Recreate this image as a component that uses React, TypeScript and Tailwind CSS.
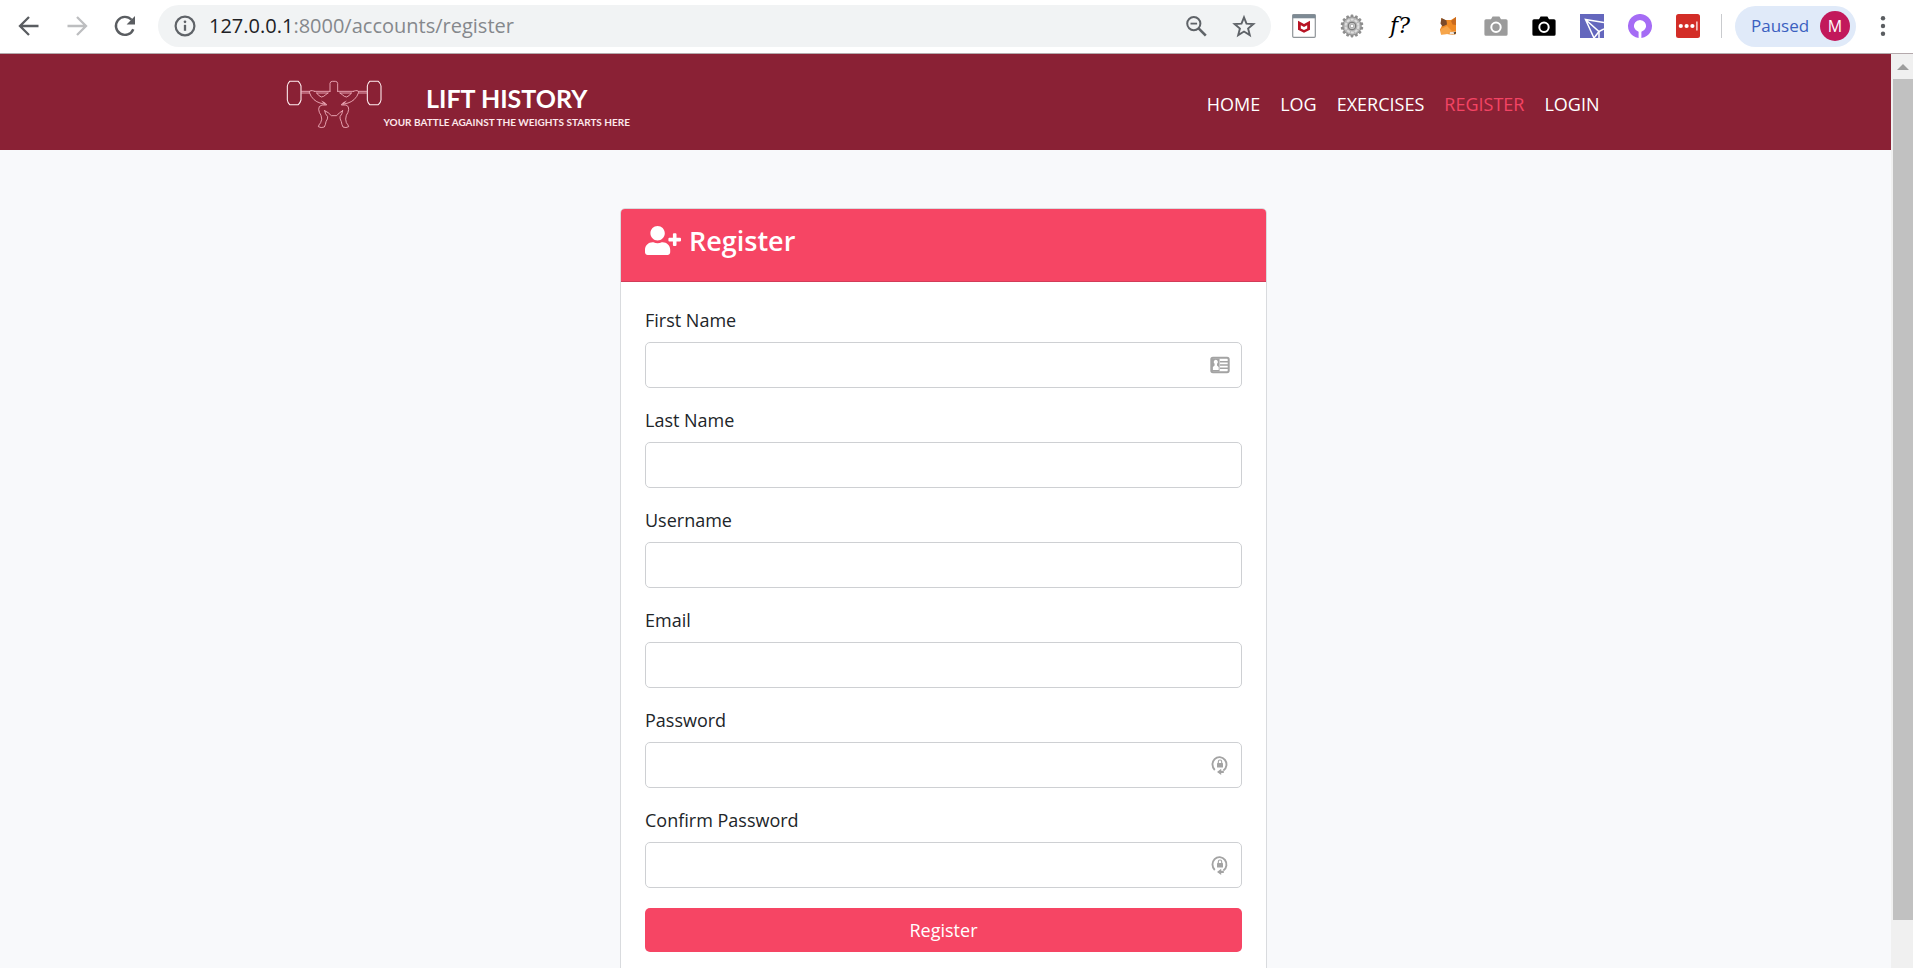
import React from 'react'
import { FaUserPlus } from 'react-icons/fa'

type Field = { id: string; label: string; type: string; badge?: 'card' | 'lock' }

const FIELDS: Field[] = [
  { id: 'first_name', label: 'First Name', type: 'text', badge: 'card' },
  { id: 'last_name', label: 'Last Name', type: 'text' },
  { id: 'username', label: 'Username', type: 'text' },
  { id: 'email', label: 'Email', type: 'email' },
  { id: 'password', label: 'Password', type: 'password', badge: 'lock' },
  { id: 'password2', label: 'Confirm Password', type: 'password', badge: 'lock' },
]

const LINKS = ['HOME', 'LOG', 'EXERCISES', 'REGISTER', 'LOGIN']

function ToolButton({ label, children }: { label: string; children: React.ReactNode }) {
  return (
    <button type="button" aria-label={label} className="flex size-6 shrink-0 items-center justify-center">
      {children}
    </button>
  )
}

function GearIcon() {
  const teeth = Array.from({ length: 14 }, (_, i) => (i * 360) / 14)
  return (
    <svg viewBox="0 0 24 24" className="size-6">
      {teeth.map((a) => (
        <rect key={a} x="10.6" y="0.6" width="2.8" height="4" rx="0.8" fill="#8f8f8f" transform={`rotate(${a} 12 12)`} />
      ))}
      <circle cx="12" cy="12" r="9.2" fill="#b4b4b4" stroke="#808080" strokeWidth="0.8" />
      <circle cx="12" cy="12" r="6.4" fill="none" stroke="#dedede" strokeWidth="2" strokeDasharray="3 1" />
      <circle cx="12" cy="12" r="3.8" fill="#c9c9c9" stroke="#707070" strokeWidth="1" />
      <circle cx="12" cy="12" r="1.8" fill="#fff" stroke="#888" strokeWidth="0.6" />
    </svg>
  )
}

function CameraIcon({ color, inner }: { color: string; inner: string }) {
  return (
    <svg viewBox="0 0 24 24" className="size-6">
      <path d="M2 5.2h5L8.6 2.4h6.8L17 5.200h5a1.600 1.600 0 0 1 1.600 1.600v13.400a1.600 1.600 0 0 1-1.600 1.600H2a1.600 1.600 0 0 1-1.600-1.600V6.800A1.600 1.600 0 0 1 2 5.200Z" fill={color} />
      <circle cx="12" cy="13.2" r="4.7" fill={inner} stroke="#fff" strokeWidth="2" />
    </svg>
  )
}

function BrowserBar() {
  return (
    <div className="flex h-[54px] shrink-0 items-center border-b border-[#b4a9ac] bg-white pl-[17px] pb-px">
      <div className="flex shrink-0 gap-6">
        <ToolButton label="Back">
          <svg viewBox="0 0 24 24" className="size-6" fill="none" stroke="#5a5d61" strokeWidth="2.3">
            <path d="M21.5 12H3.500M12 3 3 12l9 9" />
          </svg>
        </ToolButton>
        <ToolButton label="Forward">
          <svg viewBox="0 0 24 24" className="size-6" fill="none" stroke="#bdbec0" strokeWidth="2.3">
            <path d="M2.5 12h18M12 3l9 9-9 9" />
          </svg>
        </ToolButton>
        <ToolButton label="Reload">
          <svg viewBox="0 0 24 24" className="size-6">
            <path d="M20.3 15.200A9 9 0 1 1 18.600 5.800" fill="none" stroke="#5a5d61" strokeWidth="2.4" />
            <path d="M22 2v8.400h-8.400Z" fill="#5a5d61" />
          </svg>
        </ToolButton>
      </div>

      <div className="ml-[21px] flex h-[42px] min-w-0 flex-1 items-center rounded-full bg-[#f1f3f4] pr-[15px] pl-[15px]">
        <svg viewBox="0 0 24 24" className="size-6 shrink-0">
          <circle cx="12" cy="12" r="9.4" fill="none" stroke="#5f6368" strokeWidth="2.2" />
          <path d="M12 10.800v6" stroke="#5f6368" strokeWidth="2.3" />
          <circle cx="12" cy="7.8" r="1.35" fill="#5f6368" />
        </svg>
        <p className="ml-3 min-w-0 flex-1 truncate text-xl leading-7 text-[#85888c]">
          <span className="text-[#202124]">127.0.0.1</span>:8000/accounts/register
        </p>
        <div className="flex gap-6">
          <ToolButton label="Zoom">
            <svg viewBox="0 0 24 24" className="size-6" fill="none" stroke="#5f6368">
              <circle cx="9.8" cy="9.6" r="6.6" strokeWidth="2" />
              <path d="m14.600 14.400 7.200 7.200" strokeWidth="2.6" />
              <path d="M6.500 9.600h6.600" strokeWidth="1.8" />
            </svg>
          </ToolButton>
          <ToolButton label="Bookmark">
            <svg viewBox="0 0 24 24" className="size-6" fill="none" stroke="#5f6368" strokeWidth="1.9">
              <path d="m12 3.300 2.500 6.300 6.900.5-5.300 4.400 1.700 6.600-5.800-3.600-5.800 3.600 1.700-6.600-5.300-4.400 6.900-.5Z" />
            </svg>
          </ToolButton>
        </div>
      </div>

      <div className="ml-[21px] flex shrink-0 gap-6">
        <ToolButton label="WebAdvisor">
          <svg viewBox="0 0 24 24" className="size-6">
            <rect x="0.7" y="0.7" width="22.6" height="22.6" rx="1" fill="#fff" stroke="#8f9498" strokeWidth="1.2" />
            <path d="M0.500 0.500h23v3.800h-23Z" fill="#7d8a94" />
            <path d="M6 6.800 12 10l6-3.200v9l-6 3-6-3Z" fill="#b81424" />
            <path d="m8.800 11.300 3.200 1.600 3.200-1.600v3.200L12 16l-3.200-1.500Z" fill="#fff" />
          </svg>
        </ToolButton>
        <ToolButton label="Settings extension">
          <GearIcon />
        </ToolButton>
        <ToolButton label="Font finder">
          <span className="font-['DejaVu_Serif',serif] text-[22px] leading-6 whitespace-nowrap text-black italic">f?</span>
        </ToolButton>
        <ToolButton label="Wallet">
          <svg viewBox="0 0 24 24" className="size-6">
            <path d="m5 4 4 2h6l5-3v17l-3 1-6-1-6 .5-1-5 2-4Z" fill="#ef8a25" />
            <path d="m5.500 4 5 2.500.5 4-4.500 2-2-3Z" fill="#7a4a2a" />
            <path d="m20 3-5 4 1.500 3.500 3.500.5Z" fill="#c96a1e" />
            <path d="m5 15 6-3 5 5-4 3-7 .5Z" fill="#f6a54a" />
            <path d="m14 18 5.500-.5-1.500 3-4.500-.2Z" fill="#efe3d8" />
            <path d="m17.500 18.500 2.500-.5-1 2.500Z" fill="#222" />
          </svg>
        </ToolButton>
        <ToolButton label="Capture">
          <CameraIcon color="#9b9b9b" inner="#9b9b9b" />
        </ToolButton>
        <ToolButton label="Screenshot">
          <CameraIcon color="#000" inner="#000" />
        </ToolButton>
        <ToolButton label="Cursor">
          <svg viewBox="0 0 24 24" className="size-6">
            <path d="M0 0h24v24H0Z" fill="#6467bd" />
            <path d="M24 8.500 5.500 5.500 14 24M5.500 5.500 19 17.500 24 15M19 17.500V24" fill="none" stroke="#fff" strokeWidth="1.5" />
            <path d="m14 24 5-6.500" fill="none" stroke="#fff" strokeWidth="1.500" />
          </svg>
        </ToolButton>
        <ToolButton label="Ring">
          <svg viewBox="0 0 24 24" className="size-6">
            <path d="M10.600 23.900A12 12 0 1 1 13.400 23.900V17.800a6 6 0 1 0-2.800 0Z" fill="#a56cf5" />
          </svg>
        </ToolButton>
        <ToolButton label="Password manager">
          <svg viewBox="0 0 24 24" className="size-6">
            <rect width="24" height="24" rx="2.5" fill="#d32d27" />
            <circle cx="4.8" cy="12" r="2.1" fill="#fff" />
            <circle cx="10.6" cy="12" r="2.1" fill="#fff" />
            <circle cx="16.4" cy="12" r="2.1" fill="#fff" />
            <path d="M20.900 7.500v9" stroke="#fff" strokeWidth="1.2" />
          </svg>
        </ToolButton>
      </div>

      <div className="ml-[21px] h-6 w-px shrink-0 bg-[#c9cbce]" />
      <button type="button" className="ml-[13px] flex h-[41px] w-[121px] shrink-0 items-center justify-between rounded-full bg-[#e0eaf9] pr-[6px] pl-4 text-[#3b5fc0]">
        <span className="text-[17px] leading-6">Paused</span>
        <span className="flex size-[30px] items-center justify-center rounded-full bg-[#c2185b] text-base leading-none text-white">M</span>
      </button>
      <button type="button" aria-label="Menu" className="mr-[18px] ml-[15px] flex size-6 shrink-0 items-center justify-center">
        <svg viewBox="0 0 24 24" className="size-6" fill="#5a5d61">
          <circle cx="12" cy="4.3" r="2.2" />
          <circle cx="12" cy="12" r="2.2" />
          <circle cx="12" cy="19.7" r="2.2" />
        </svg>
      </button>
    </div>
  )
}

function LifterLogo() {
  return (
    <svg viewBox="6 12 288 147" className="h-[49px] w-24 shrink-0" fill="none" stroke="#f3b4c0" strokeWidth="2.6" strokeLinejoin="round" strokeLinecap="round">
      {/* plates */}
      <g stroke="#ffeef1" strokeWidth="3.2">
        <path d="M17 16h26q6 6 8 14v42q-2 8-8 14H17q-6-6-7-14V30q1-8 7-14Z" />
        <path d="M257 16h26q7 6 8 14v42q-1 8-8 14h-26q-6-6-7-14V30q1-8 7-14Z" />
      </g>
      {/* bar */}
      <path d="M52 46h25M52 51h25M92 46h46M98 51h34M249 46h-25M249 51h-25M208 46h-47M202 51h-34" />
      {/* head */}
      <path d="M138 46V22q1-6 7-6h9q6 0 7 6v24" />
      {/* arms */}
      <path d="M92 46q-15-6-16 3 4 13 14 22 8 7 18 10l16 4-10-9M98 51q4 8 14 12 8-1 12-6l8-6" />
      <path d="M208 46q15-6 16 3-4 13-14 22-8 7-18 10l-16 4 10-9M202 51q-4 8-14 12-8-1-12-6l-8-6" />
      {/* legs */}
      <path d="M118 78q8 3 10 9h-14q-11 3-10 13 1 10 7 18 5 12-1 22-6 7-7 12 8 5 18 1 4-8 5-16 6-9 5-15-8-8-9-18" />
      <path d="M182 78q-8 3-10 9h14q9 3 8 13-1 10-7 18-4 12 0 22 6 7 7 12-8 5-17 1-4-8-5-16-5-9-4-15 7-8 8-18" />
      <path d="M122 104q12 5 20 15h16q8-10 18-15" />
    </svg>
  )
}

function SiteHeader() {
  return (
    <header className="bg-[#8a2135] pr-[30px] pl-6">
      <nav className="mx-auto flex h-24 w-full max-w-[1314px] items-center justify-between pt-1">
        <a href="#home" className="flex items-center gap-0.5 text-white">
          <LifterLogo />
          <span className="flex flex-col items-center pt-2 font-[Lato,sans-serif] font-bold">
            <span className="text-[25px] leading-7">LIFT HISTORY</span>
            <span className="text-[10px] leading-5 text-[#fde7eb]">YOUR BATTLE AGAINST THE WEIGHTS STARTS HERE</span>
          </span>
        </a>
        <ul className="flex gap-5 text-lg leading-7">
          {LINKS.map((name) => (
            <li key={name}>
              <a href={'#' + name.toLowerCase()} className={name === 'REGISTER' ? 'text-[#f44464]' : 'text-white'}>
                {name}
              </a>
            </li>
          ))}
        </ul>
      </nav>
    </header>
  )
}

function FieldBadge({ kind }: { kind: 'card' | 'lock' }) {
  return (
    <span className="pointer-events-none absolute inset-y-0 right-3 flex items-center">
      {kind === 'card' ? (
        <svg viewBox="0 0 20 20" className="size-5">
          <rect x="1.3" y="2.8" width="17.4" height="14.4" rx="1.6" fill="#fff" stroke="#a3a3a3" strokeWidth="2" />
          <path d="M2 3.500h7.600v13H2Z" fill="#a3a3a3" />
          <path d="M5.800 4.800a2 2.200 0 0 1 1.200 4v1.700l1.700 1.600v2.900H2.900v-2.900l1.700-1.600V8.800a2 2.200 0 0 1 1.200-4Z" fill="#fff" />
          <path d="M10 6.800h8M10 10h8M10 13.200h8" stroke="#a3a3a3" strokeWidth="1.6" />
        </svg>
      ) : (
        <svg viewBox="0 0 20 20" className="size-5">
          <path d="M4.800 15A7 7.400 0 1 1 13.400 15.600" fill="none" stroke="#a3a3a3" strokeWidth="1.9" />
          <path d="m7 17 4.200-3.300v2h2.600v2.400h-2.600V20Z" fill="#a3a3a3" />
          <rect x="7" y="8" width="6" height="4.6" rx="0.6" fill="#a3a3a3" />
          <path d="M8.300 8.200V6.700a1.700 1.700 0 0 1 3.400 0v1.500" fill="none" stroke="#a3a3a3" strokeWidth="1.1" />
        </svg>
      )}
    </span>
  )
}

function RegisterCard() {
  return (
    <section className="mx-auto w-full max-w-[647px] rounded-[5px] border border-[#d9dbde] bg-white">
      <div className="flex h-[73px] items-start gap-2 rounded-t-[4px] border-b border-[#d23c58] bg-[#f64564] px-6 pt-[14px] text-white">
        <FaUserPlus className="mt-[3px] h-[29px] w-9" />
        <h1 className="text-[27px] leading-9 font-semibold">Register</h1>
      </div>
      <form className="flex flex-col px-6 pt-6 pb-6" onSubmit={(e) => e.preventDefault()}>
        <div className="flex flex-col gap-[18px]">
          {FIELDS.map((f) => (
            <div key={f.id} className="flex flex-col gap-2">
              <label htmlFor={f.id} className="text-lg leading-7 text-[#212529]">
                {f.label}
              </label>
              <div className="relative">
                <input
                  id={f.id}
                  name={f.id}
                  type={f.type}
                  className="block h-[46px] w-full rounded-[5px] border border-[#ced0d3] bg-white px-4 text-lg outline-none"
                />
                {f.badge && <FieldBadge kind={f.badge} />}
              </div>
            </div>
          ))}
        </div>
        <button type="submit" className="mt-5 h-11 rounded-[5px] bg-[#f64564] text-lg leading-7 text-white">
          Register
        </button>
      </form>
    </section>
  )
}

function Scrollbar() {
  return (
    <div aria-hidden="true" className="flex w-[22px] shrink-0 flex-col bg-[#f0f0f0] pl-0.5">
      <div className="flex h-[25px] shrink-0 items-center justify-center">
        <svg viewBox="0 0 12 6" className="h-[6px] w-3">
          <path d="M0 6 6 0l6 6Z" fill="#9d9d9d" />
        </svg>
      </div>
      <div className="h-[92%] shrink-0 bg-[#c1c1c1]" />
    </div>
  )
}

export default function App() {
  return (
    <div className="flex h-screen flex-col overflow-hidden bg-white font-['Open_Sans','Noto_Sans',sans-serif]">
      <BrowserBar />
      <div className="flex min-h-0 flex-1">
        <div className="min-w-0 flex-1 overflow-hidden bg-[#f8f9fb]">
          <SiteHeader />
          <main className="pt-[58px] pr-1 pb-12">
            <RegisterCard />
          </main>
        </div>
        <Scrollbar />
      </div>
    </div>
  )
}
